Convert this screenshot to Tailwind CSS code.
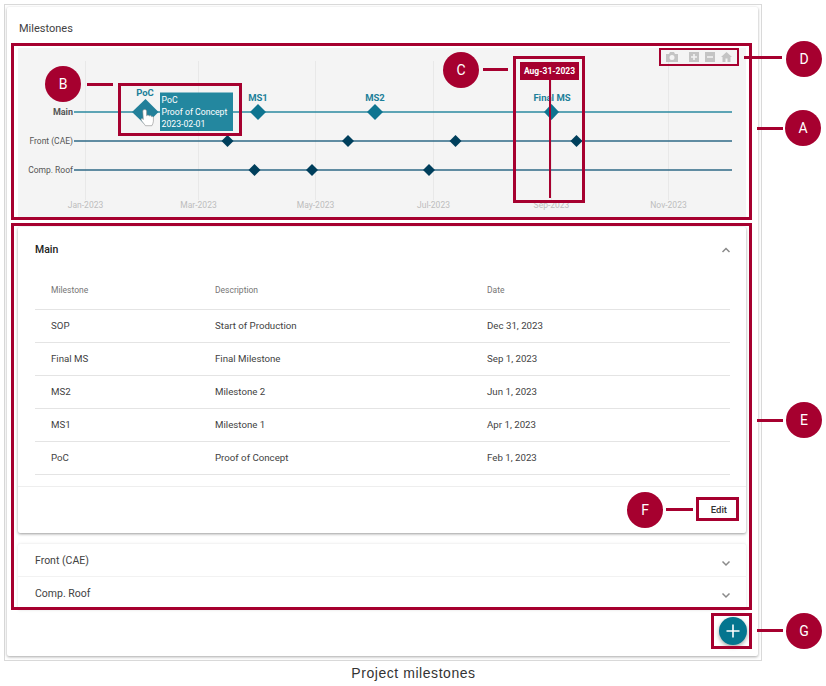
<!DOCTYPE html>
<html>
<head>
<meta charset="utf-8">
<script src="https://cdn.jsdelivr.net/npm/@tailwindcss/browser@4"></script>
</head>
<body class="bg-white [font-family:Roboto,sans-serif]">
<div class="relative w-[826px] h-[686px] overflow-hidden pt-[4px] pl-[4px]">

  <!-- screenshot frame -->
  <div class="w-[758px] h-[657px] border border-[#d9d9d9] pt-[2px] pl-[2px] pr-[3px] pb-[4px]">
    <div class="h-full bg-white rounded-[2px] shadow-[0_1px_3px_rgba(0,0,0,0.35)] px-[11px]">
      <h2 class="h-[41px] pt-[15px] pl-[1px] text-[11px] leading-[14px] text-[#424242]">Milestones</h2>

      <!-- timeline chart -->
      <svg class="block w-[728px] h-[170px]" viewBox="18 48 728 170" xmlns="http://www.w3.org/2000/svg">
        <rect x="18" y="48" width="728" height="170" fill="#f4f4f4"/>
        <g stroke="#e8e8e8" stroke-width="1">
          <path d="M85.5 61V200M198.5 61V200M315.5 61V200M433.5 61V200M551.5 61V200M668.5 61V200"/>
        </g>
        <path d="M74 112H732" stroke="#2b8aa0" stroke-width="1.5"/>
        <path d="M74 141H732M74 170H732" stroke="#2f6a86" stroke-width="1.5"/>

        <g fill="#bdbdbd" font-size="8.5" text-anchor="middle">
          <text x="85.5" y="208">Jan-2023</text>
          <text x="198.5" y="208">Mar-2023</text>
          <text x="315.5" y="208">May-2023</text>
          <text x="433.5" y="208">Jul-2023</text>
          <text x="551.5" y="208">Sep-2023</text>
          <text x="668.5" y="208">Nov-2023</text>
        </g>

        <g fill="#555" font-size="8.500" text-anchor="end">
          <text x="73" y="115" font-size="9" font-weight="700">Main</text>
          <text x="73" y="144">Front (CAE)</text>
          <text x="73" y="173">Comp. Roof</text>
        </g>

        <g fill="#0e7490">
          <path d="M132 112L145.500 99L158.500 112L145.500 125Z" fill="#23809a"/>
          <path d="M250 112L258 104L266 112L258 120Z"/>
          <path d="M367 112L375 104L383 112L375 120Z"/>
          <path d="M544 112L551.500 104L559 112L551.500 120Z"/>
        </g>
        <g fill="#003f5c">
          <path d="M221.500 141L227.500 135L233.500 141L227.500 147Z"/>
          <path d="M342 141L348 135L354 141L348 147Z"/>
          <path d="M449.500 141L455.500 135L461.500 141L455.500 147Z"/>
          <path d="M570.500 141L576.500 135L582.500 141L576.500 147Z"/>
          <path d="M248.500 170L254.500 164L260.500 170L254.500 176Z"/>
          <path d="M306 170L312 164L318 170L312 176Z"/>
          <path d="M423 170L429 164L435 170L429 176Z"/>
        </g>

        <g fill="#1c7f99" font-size="9.500" font-weight="700" text-anchor="middle">
          <text x="145" y="96">PoC</text>
          <text x="258" y="101">MS1</text>
          <text x="375" y="101">MS2</text>
          <text x="552" y="101">Final MS</text>
        </g>

        <!-- hover label -->
        <rect x="160" y="92.500" width="73" height="38.500" fill="#23879f"/>
        <g fill="#fff" font-size="8.700">
          <text x="161.500" y="103">PoC</text>
          <text x="161.500" y="115">Proof of Concept</text>
          <text x="161.500" y="127">2023-02-01</text>
        </g>

        <!-- hand cursor -->
        <path d="M142.800 111.200c0-2.200 3.800-2.200 3.800 0v4.600c.6-1 2.400-.9 2.600.3.600-.8 2.300-.6 2.400.6.700-.5 1.800-.2 1.800 1v3.600c0 1.700-1 3-1.500 4.400h-6.500c-.8-1.500-3.200-3.600-4.200-5.600-.6-1.300.9-2 1.800-1.100l.3.500z" fill="#fff" stroke="#8a8a8a" stroke-width=".6"/>
      </svg>

      <!-- accordion -->
      <div class="mt-[9px] w-[728px]">
        <div class="h-[306px] bg-white rounded-[2px] shadow-[0_1px_3px_rgba(0,0,0,0.4)]">
          <div class="flex items-center justify-between h-[44px] pt-[2px] pl-[17px] pr-[14px]">
            <span class="text-[10.5px] font-medium text-[#212121]">Main</span>
            <svg class="w-[12px] h-[12px]" viewBox="0 0 12 12"><path d="M2.500 8L6 4.500L9.500 8" fill="none" stroke="#8a8a8a" stroke-width="1.500"/></svg>
          </div>
          <table class="ml-[17px] w-[695px] table-fixed border-collapse text-[9.7px] text-[#424242]">
            <thead>
              <tr class="h-[38px] border-b border-[#e4e4e4] text-left text-[8.5px] text-[#757575]">
                <th class="w-[164px] pl-[16px] pt-[2px] font-normal">Milestone</th>
                <th class="w-[272px] pl-[16px] pt-[2px] font-normal">Description</th>
                <th class="pl-[16px] pt-[2px] font-normal">Date</th>
              </tr>
            </thead>
            <tbody>
              <tr class="h-[33px] border-b border-[#e4e4e4]"><td class="pl-[16px] pt-[1px]">SOP</td><td class="pl-[16px] pt-[1px]">Start of Production</td><td class="pl-[16px] pt-[1px]">Dec 31, 2023</td></tr>
              <tr class="h-[33px] border-b border-[#e4e4e4]"><td class="pl-[16px] pt-[1px]">Final MS</td><td class="pl-[16px] pt-[1px]">Final Milestone</td><td class="pl-[16px] pt-[1px]">Sep 1, 2023</td></tr>
              <tr class="h-[33px] border-b border-[#e4e4e4]"><td class="pl-[16px] pt-[1px]">MS2</td><td class="pl-[16px] pt-[1px]">Milestone 2</td><td class="pl-[16px] pt-[1px]">Jun 1, 2023</td></tr>
              <tr class="h-[33px] border-b border-[#e4e4e4]"><td class="pl-[16px] pt-[1px]">MS1</td><td class="pl-[16px] pt-[1px]">Milestone 1</td><td class="pl-[16px] pt-[1px]">Apr 1, 2023</td></tr>
              <tr class="h-[33px] border-b border-[#e4e4e4]"><td class="pl-[16px] pt-[1px]">PoC</td><td class="pl-[16px] pt-[1px]">Proof of Concept</td><td class="pl-[16px] pt-[1px]">Feb 1, 2023</td></tr>
            </tbody>
          </table>
          <div class="mt-[11px] h-[47px] border-t border-[#eeeeee] flex items-center justify-end pr-[17px]">
            <span class="text-[9.5px] font-medium text-[#333] pr-[2px] pt-[1px]">Edit</span>
          </div>
        </div>

        <div class="mt-[11px] bg-white rounded-t-[2px] shadow-[0_0_3px_rgba(0,0,0,0.12)] text-[10.5px] text-[#424242]">
          <div class="flex items-center justify-between h-[33px] pt-[2px] pl-[17px] pr-[14px] border-b border-[#f2f2f2]">
            <span>Front (CAE)</span>
            <svg class="w-[12px] h-[12px] mt-[3px]" viewBox="0 0 12 12"><path d="M2.500 4.500L6 8L9.500 4.500" fill="none" stroke="#8a8a8a" stroke-width="1.500"/></svg>
          </div>
          <div class="flex items-center justify-between h-[33px] pl-[17px] pr-[14px]">
            <span>Comp. Roof</span>
            <svg class="w-[12px] h-[12px] mt-[3px]" viewBox="0 0 12 12"><path d="M2.500 4.500L6 8L9.500 4.500" fill="none" stroke="#8a8a8a" stroke-width="1.500"/></svg>
          </div>
        </div>
      </div>
    </div>
  </div>

  <p class="mt-[3px] w-[819px] text-center [font-family:'Liberation_Sans',Arial,sans-serif] text-[14px] leading-[18px] text-[#333] tracking-[0.55px]">Project milestones</p>

  <!-- floating add button -->
  <button class="absolute left-[719px] top-[617px] w-[28px] h-[28px] rounded-full bg-[#04758f] shadow-[0_2px_4px_rgba(0,0,0,0.35)] flex items-center justify-center">
    <svg class="w-[16px] h-[16px]" viewBox="0 0 16 16"><path d="M8 1.500V14.500M1.500 8H14.500" stroke="#fff" stroke-width="1.600" fill="none"/></svg>
  </button>

  <!-- chart mode bar -->
  <div class="absolute left-[666px] top-[52px] flex items-center">
    <svg class="w-[12px] h-[10px]" viewBox="0 0 12 10"><path d="M0 2h3l1-2h4l1 2h3v8H0zM6 3a2.500 2.500 0 1 0 0 5a2.500 2.500 0 0 0 0-5z" fill="#c4c4c4" fill-rule="evenodd"/></svg>
    <svg class="w-[10px] h-[10px] ml-[11px]" viewBox="0 0 10 10"><path d="M0 0h10v10H0zM4.200 2v2.200H2v1.600h2.200V8h1.600V5.800H8V4.200H5.800V2z" fill="#c4c4c4" fill-rule="evenodd"/></svg>
    <svg class="w-[10px] h-[10px] ml-[6px]" viewBox="0 0 10 10"><path d="M0 0h10v10H0zM2 4.200v1.600h6V4.200z" fill="#c4c4c4" fill-rule="evenodd"/></svg>
    <svg class="w-[11px] h-[10px] ml-[6px]" viewBox="0 0 11 10"><path d="M5.500 0L11 5H9.500V10H6.500V6.500H4.500V10H1.500V5H0z" fill="#c4c4c4"/></svg>
  </div>

  <!-- callout: date marker -->
  <div class="absolute left-[520px] top-[62px] w-[59px] h-[18px] bg-[#a6002f] text-white text-[8.5px] font-bold flex items-center justify-center">Aug-31-2023</div>
  <div class="absolute left-[549px] top-[80px] w-[1.500px] h-[118px] bg-[#a6002f]"></div>

  <!-- callout frames -->
  <div class="absolute left-[11px] top-[43px] w-[741px] h-[177px] border-[3px] border-[#a6002f]"></div>
  <div class="absolute left-[11px] top-[223px] w-[741px] h-[387px] border-[3px] border-[#a6002f]"></div>
  <div class="absolute left-[118px] top-[83px] w-[124px] h-[53px] border-[3px] border-[#a6002f]"></div>
  <div class="absolute left-[513px] top-[56px] w-[72px] h-[147px] border-[3px] border-[#a6002f]"></div>
  <div class="absolute left-[659px] top-[48px] w-[80px] h-[18px] border-[2px] border-[#a6002f]"></div>
  <div class="absolute left-[696px] top-[497px] w-[43px] h-[24px] border-[3px] border-[#a6002f]"></div>
  <div class="absolute left-[711px] top-[613px] w-[41px] h-[36px] border-[3px] border-[#a6002f]"></div>

  <!-- callout leaders -->
  <div class="absolute left-[757px] top-[127px] w-[26px] h-[3px] bg-[#a6002f]"></div>
  <div class="absolute left-[87px] top-[83px] w-[26px] h-[3px] bg-[#a6002f]"></div>
  <div class="absolute left-[483px] top-[68px] w-[25px] h-[3px] bg-[#a6002f]"></div>
  <div class="absolute left-[744px] top-[56px] w-[38px] h-[3px] bg-[#a6002f]"></div>
  <div class="absolute left-[757px] top-[419px] w-[26px] h-[3px] bg-[#a6002f]"></div>
  <div class="absolute left-[666px] top-[508px] w-[27px] h-[3px] bg-[#a6002f]"></div>
  <div class="absolute left-[757px] top-[629px] w-[26px] h-[3px] bg-[#a6002f]"></div>

  <!-- callout badges -->
  <div class="absolute left-[785px] top-[110px] w-[36px] h-[36px] rounded-full bg-[#a6002f] text-white text-[14px] flex items-center justify-center">A</div>
  <div class="absolute left-[45px] top-[66px] w-[36px] h-[36px] rounded-full bg-[#a6002f] text-white text-[14px] flex items-center justify-center">B</div>
  <div class="absolute left-[443px] top-[52px] w-[36px] h-[36px] rounded-full bg-[#a6002f] text-white text-[14px] flex items-center justify-center">C</div>
  <div class="absolute left-[786px] top-[41px] w-[36px] h-[36px] rounded-full bg-[#a6002f] text-white text-[14px] flex items-center justify-center">D</div>
  <div class="absolute left-[786px] top-[402px] w-[36px] h-[36px] rounded-full bg-[#a6002f] text-white text-[14px] flex items-center justify-center">E</div>
  <div class="absolute left-[627px] top-[492px] w-[36px] h-[36px] rounded-full bg-[#a6002f] text-white text-[14px] flex items-center justify-center">F</div>
  <div class="absolute left-[786px] top-[613px] w-[36px] h-[36px] rounded-full bg-[#a6002f] text-white text-[14px] flex items-center justify-center">G</div>
</div>
</body>
</html>
